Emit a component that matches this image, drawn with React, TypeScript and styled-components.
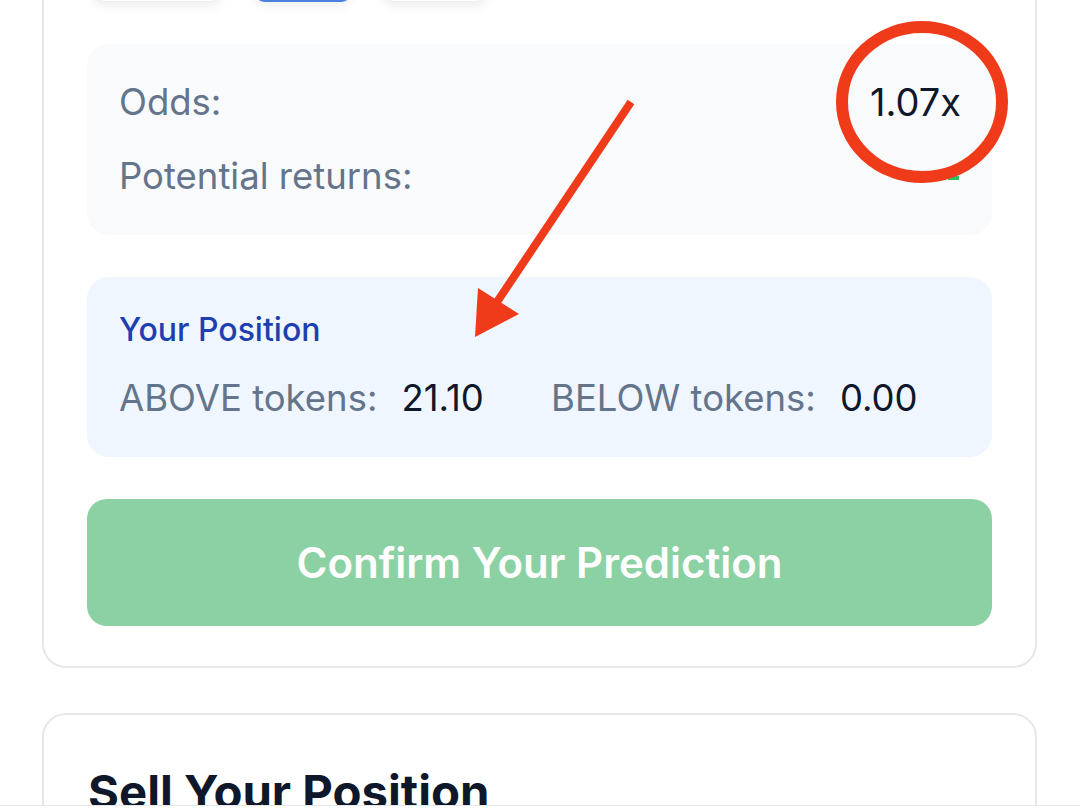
import React from 'react';
import styled, { createGlobalStyle } from 'styled-components';

const GlobalStyle = createGlobalStyle`
  *, *::before, *::after {
    box-sizing: border-box;
  }
  html, body {
    margin: 0;
    padding: 0;
    background: #ffffff;
    font-family: Inter, 'Noto Sans', sans-serif;
    overflow: hidden;
  }
`;

const Page = styled.div`
  position: relative;
  margin-top: -60px;
  padding: 0 43px 0 42px;
  display: flex;
  flex-direction: column;
  gap: 45px;
`;

const Card = styled.section<{ $top?: number }>`
  border: 2px solid #e5e7eb;
  border-radius: 24px;
  padding: ${(p) => p.$top ?? 20}px 43px 40px;
  display: flex;
  flex-direction: column;
  gap: 42px;
  background: #ffffff;
`;

const ChoiceRow = styled.div`
  display: flex;
  gap: 30px;
  height: 40px;
  padding-left: 5px;
`;

const Choice = styled.div<{ $active?: boolean; $w: number }>`
  width: ${(p) => p.$w}px;
  border-radius: 12px;
  background: ${(p) => (p.$active ? '#4a80df' : '#ffffff')};
  border: 1px solid ${(p) => (p.$active ? '#4a80df' : '#eceef1')};
  box-shadow: 0 6px 8px rgba(15, 23, 42, 0.05);

  & + & + & {
    margin-left: -1px;
  }
`;

const OddsBox = styled.div`
  background: #f8fafc;
  border-radius: 22px;
  padding: 32px;
  display: flex;
  flex-direction: column;
  gap: 21px;
`;

const Row = styled.div`
  display: flex;
  justify-content: space-between;
  align-items: center;
  font-size: 36.5px;
  line-height: 53px;
`;

const Label = styled.span`
  color: #64748b;
`;

const Value = styled.span`
  color: #0f172a;
`;

const OddsValue = styled(Value)`
  font-size: 38px;
  margin-right: -1px;
`;

const ReturnsValue = styled.span`
  display: block;
  width: 11px;
  height: 4px;
  margin: 3px 1px 0 0;
  background: #22c55e;
`;

const PositionBox = styled.div`
  background: #eff6ff;
  border-radius: 22px;
  padding: 30px 32px 32px;
  display: flex;
  flex-direction: column;
  gap: 18px;
`;

const PositionTitle = styled.div`
  color: #1e40af;
  font-size: 32px;
  font-weight: 500;
  line-height: 46px;
`;

const TokenRow = styled.div`
  display: flex;
  font-size: 36.5px;
  line-height: 54px;
`;

const TokenItem = styled.div<{ $w?: number }>`
  display: flex;
  gap: 24px;
  width: ${(p) => (p.$w ? `${p.$w}px` : 'auto')};
`;

const ConfirmButton = styled.button`
  height: 127px;
  border: none;
  border-radius: 20px;
  background: #8bd1a3;
  color: #ffffff;
  font-family: Inter, 'Noto Sans', sans-serif;
  font-size: 42px;
  font-weight: 600;
`;

const Heading = styled.h2`
  margin: 0;
  color: #0f172a;
  font-size: 47.3px;
  font-weight: 700;
  line-height: 62px;
  padding-left: 1px;
`;

const BottomBar = styled.div`
  position: fixed;
  left: 0;
  right: 0;
  bottom: 0;
  height: 6px;
  background: #ffffff;
  border-top: 1px solid #e5e7eb;
`;

const Annotation = styled.svg`
  position: fixed;
  left: 0;
  top: 0;
  pointer-events: none;
`;

export default function App() {
  return (
    <>
      <GlobalStyle />
      <Page>
        <Card>
          <ChoiceRow>
            <Choice $w={131} />
            <Choice $w={100} $active />
            <Choice $w={106} />
          </ChoiceRow>
          <OddsBox>
            <Row>
              <Label>Odds:</Label>
              <OddsValue>1.07x</OddsValue>
            </Row>
            <Row>
              <Label>Potential returns:</Label>
              <ReturnsValue />
            </Row>
          </OddsBox>
          <PositionBox>
            <PositionTitle>Your Position</PositionTitle>
            <TokenRow>
              <TokenItem $w={432}>
                <Label>ABOVE tokens:</Label>
                <Value>21.10</Value>
              </TokenItem>
              <TokenItem>
                <Label>BELOW tokens:</Label>
                <Value>0.00</Value>
              </TokenItem>
            </TokenRow>
          </PositionBox>
          <ConfirmButton>Confirm Your Prediction</ConfirmButton>
        </Card>
        <Card $top={46}>
          <Heading>Sell Your Position</Heading>
        </Card>
      </Page>
      <Annotation width="1080" height="811" viewBox="0 0 1080 811">
        <ellipse cx="922" cy="102" rx="80" ry="75" fill="none" stroke="#f03b1b" strokeWidth="12" />
        <line x1="631" y1="102" x2="497" y2="302" stroke="#f03b1b" strokeWidth="8" />
        <polygon points="475,337 478,288 519,314" fill="#f03b1b" />
      </Annotation>
      <BottomBar />
    </>
  );
}
